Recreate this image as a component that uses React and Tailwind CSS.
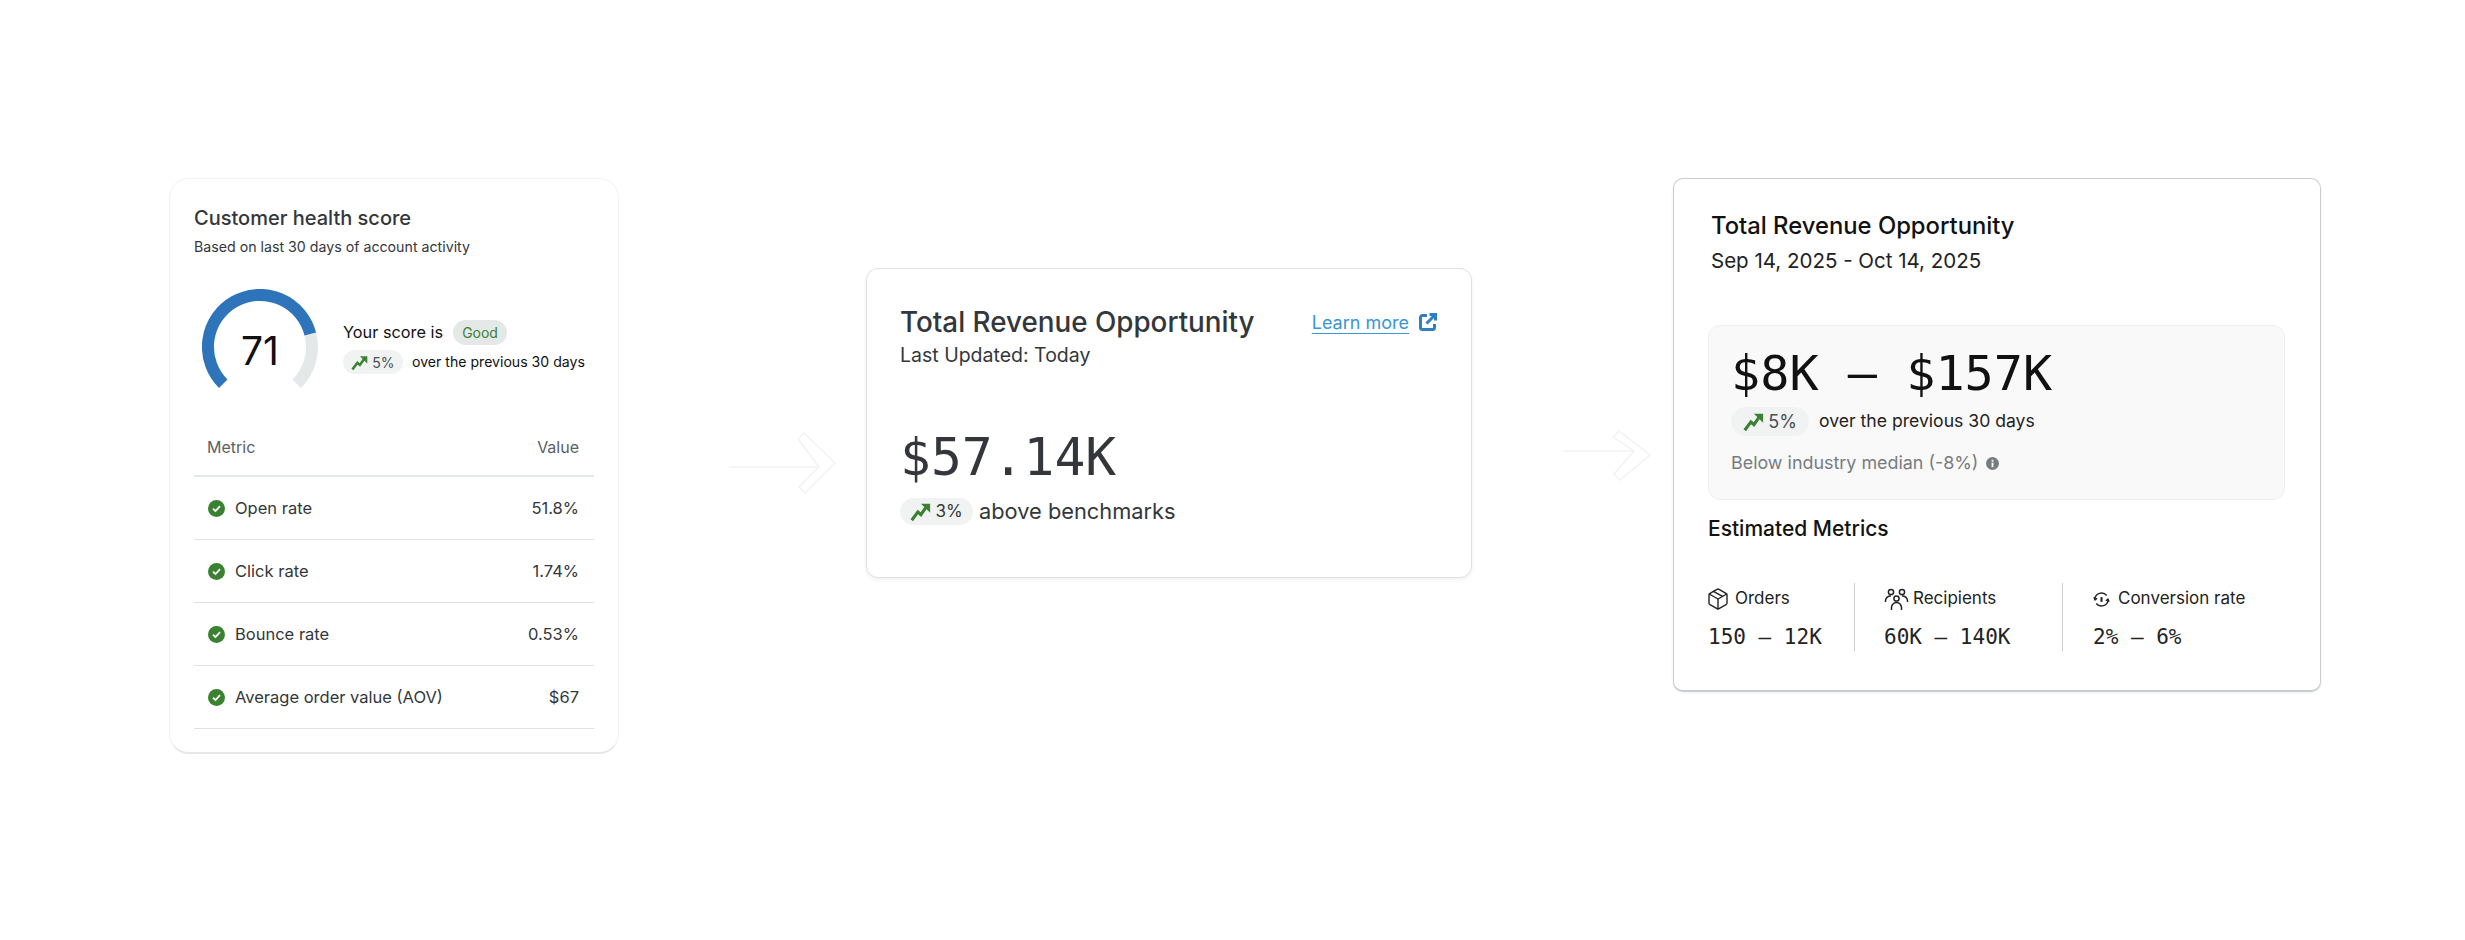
import { Package } from 'lucide-react'

const rows = [
  { label: 'Open rate', value: '51.8%' },
  { label: 'Click rate', value: '1.74%' },
  { label: 'Bounce rate', value: '0.53%' },
  { label: 'Average order value (AOV)', value: '$67' },
]

function Trend({ className }) {
  return (
    <svg viewBox="0 0 24 24" fill="none" className={className}>
      <path d="M2 22 L9 12.5 L12.5 15.5 L18.5 7" stroke="#3b8132" strokeWidth="3.6" />
      <path d="M12.5 3 H23 V13.5 Z" fill="#3b8132" />
    </svg>
  )
}

function Check() {
  return (
    <svg viewBox="0 0 17 17" className="w-[17px] h-[17px] shrink-0">
      <circle cx="8.5" cy="8.5" r="8.5" fill="#3b8132" />
      <path d="M5 8.8 L7.5 11 L12 6.2" fill="none" stroke="#fff" strokeWidth="1.8" />
    </svg>
  )
}

function Arrow({ className, w, h, line, tip }) {
  // outlined chevron with a tail, barely visible in the reference
  const top = h - 4
  return (
    <svg viewBox={`0 0 ${w} ${h}`} fill="none" stroke="#f1f2f2" strokeWidth="1.5" className={className}>
      <path d={`M0 ${line} H${w - 17}`} />
      <path d={`M${w - 38} 7 L${w - 32} 1 L${w - 1} ${tip} L${w - 31} ${top + 3} L${w - 37} ${top - 3} L${w - 17} ${line} Z`} />
    </svg>
  )
}

function HealthCard() {
  return (
    <div className="w-[450px] h-[576px] shrink-0 bg-white rounded-[20px] border border-[#f1f2f2] border-b-[#e6e8e8] border-b-2 px-[24px] pt-[26px]">
      <h2 className="text-[20px] leading-[26px] font-medium text-[#33373b]">Customer health score</h2>
      <p className="text-[14.2px] leading-[20px] mt-[6px] text-[#33373b]">Based on last 30 days of account activity</p>

      <div className="flex items-center mt-[32px]">
        <div className="relative w-[116px] h-[116px] ml-[8px] shrink-0">
          <svg viewBox="0 0 116 116" fill="none" strokeWidth="12" className="w-[116px] h-[116px]">
            <path d="M108.3 45 A52 52 0 0 1 94.77 94.77" stroke="#e4e8e8" />
            <path d="M21.23 94.77 A52 52 0 1 1 108.3 45" stroke="#2e74ba" />
          </svg>
          <span className="absolute inset-x-0 top-[40px] text-center text-[39px] leading-[44px] text-[#111]">71</span>
        </div>
        <div className="ml-[25px]">
          <div className="flex items-center">
            <span className="text-[16.3px] text-[#111]">Your score is</span>
            <span className="ml-[10px] w-[54px] h-[25px] rounded-full bg-[#e4e9e8] flex items-center justify-center text-[14px] text-[#3b8132]">Good</span>
          </div>
          <div className="flex items-center mt-[5px]">
            <span className="w-[60px] h-[24px] rounded-full bg-[#f1f3f3] flex items-center justify-center gap-[4px] text-[14px] text-[#4a4f53]">
              <Trend className="w-[17px] h-[17px]" />5%
            </span>
            <span className="ml-[9px] text-[14.1px] text-[#111]">over the previous 30 days</span>
          </div>
        </div>
      </div>

      <div className="mt-[11px]">
        <div className="flex justify-between items-center h-[61px] pt-[3px] pl-[13px] pr-[15px] border-b-2 border-[#e4e8e8] text-[16px] text-[#5b6166]">
          <span>Metric</span>
          <span>Value</span>
        </div>
        {rows.map((r) => (
          <div key={r.label} className="flex items-center h-[63px] pl-[14px] pr-[15px] border-b border-[#dfe2e2] text-[16.5px] text-[#33373b]">
            <Check />
            <span className="ml-[10px]">{r.label}</span>
            <span className="ml-auto">{r.value}</span>
          </div>
        ))}
      </div>
    </div>
  )
}

function OpportunityCard() {
  return (
    <div className="w-[606px] h-[310px] shrink-0 mt-[90px] ml-[30px] bg-white rounded-[12px] border border-[#dfe1e1] shadow-[0_2px_4px_rgba(0,0,0,0.06)] pl-[33px] pr-[34.5px] pt-[35px]">
      <div className="flex justify-between items-center">
        <h2 className="text-[27.8px] leading-[36px] font-medium text-[#33373b]">Total Revenue Opportunity</h2>
        <a className="flex items-center gap-[9.5px] text-[18px] text-[#3a96d6]">
          <span className="underline underline-offset-[4px]">Learn more</span>
          <svg viewBox="0 0 18 18" fill="none" stroke="#2f7fc4" strokeWidth="3" className="w-[18px] h-[18px]">
            <path d="M8 2.5H3.5a2 2 0 0 0-2 2v10a2 2 0 0 0 2 2h10a2 2 0 0 0 2-2V11" />
            <path d="M7.5 10.5 L16 2 M10.5 1.5 H16.5 V7.5" />
          </svg>
        </a>
      </div>
      <p className="text-[19.5px] leading-[24px] mt-[3px] text-[#33373b]">Last Updated: Today</p>
      <div className="font-[family-name:'DejaVu_Sans_Mono',monospace] text-[51.3px] leading-[60px] mt-[60px] text-[#33373b]">$57.14K</div>
      <div className="flex items-center mt-[8px]">
        <span className="w-[73px] h-[27px] rounded-full bg-[#f1f3f3] flex items-center justify-center gap-[4px] text-[17px] text-[#33373b]">
          <Trend className="w-[21px] h-[21px]" />3%
        </span>
        <span className="ml-[6px] text-[21.8px] text-[#33373b]">above benchmarks</span>
      </div>
    </div>
  )
}

function RangeCard() {
  return (
    <div className="w-[648px] h-[514px] shrink-0 ml-[22px] bg-white rounded-[10px] border border-[#c9cdcf] border-b-2 shadow-[0_1px_3px_rgba(0,0,0,0.06)] pl-[34px] pr-[35px] pt-[31px]">
      <h2 className="text-[23.8px] leading-[32px] font-medium text-[#111] ml-[3px]">Total Revenue Opportunity</h2>
      <p className="text-[20.5px] leading-[28px] mt-[5px] text-[#222] ml-[3px]">Sep 14, 2025 - Oct 14, 2025</p>

      <div className="h-[175px] mt-[50px] rounded-[12px] bg-[#f9f9f9] border border-[#eeefef] pl-[22px] pt-[19px]">
        <div className="font-[family-name:'DejaVu_Sans_Mono',monospace] text-[48.5px] leading-[56px] text-[#111]">$8K – $157K</div>
        <div className="flex items-center mt-[6px]">
          <span className="w-[78px] h-[29px] rounded-full bg-[#f1f3f3] flex items-center justify-center gap-[4px] text-[18px] text-[#4a4f53]">
            <Trend className="w-[21px] h-[21px]" />5%
          </span>
          <span className="ml-[10px] text-[17.6px] text-[#222]">over the previous 30 days</span>
        </div>
        <div className="flex items-center mt-[14px] text-[17.9px] text-[#777c80]">
          Below industry median (-8%)
          <svg viewBox="0 0 13 13" className="w-[13px] h-[13px] ml-[8px]">
            <circle cx="6.5" cy="6.5" r="6.5" fill="#777c80" />
            <rect x="5.6" y="5.6" width="1.8" height="4.6" fill="#fff" />
            <rect x="5.6" y="2.8" width="1.8" height="1.8" fill="#fff" />
          </svg>
        </div>
      </div>

      <h3 className="text-[21px] leading-[28px] font-medium text-[#111] mt-[15px]">Estimated Metrics</h3>

      <div className="flex mt-[40px] h-[68px] -ml-[2px]">
        <div className="w-[149px] border-r border-[#c9cdcf]">
          <div className="flex items-center gap-[5px] h-[26px] text-[17px] text-[#222] mt-[3px]">
            <Package className="w-[24px] h-[24px]" strokeWidth={1.4} />Orders
          </div>
          <div className="font-[family-name:'DejaVu_Sans_Mono',monospace] text-[21px] leading-[28px] mt-[11px] ml-[2px] text-[#222]">150 – 12K</div>
        </div>
        <div className="w-[208px] pl-[29px] border-r border-[#c9cdcf]">
          <div className="flex items-center gap-[4px] h-[26px] text-[17px] text-[#222] mt-[3px]">
            <svg viewBox="0 0 24 24" fill="none" stroke="#222" strokeWidth="1.5" className="w-[25px] h-[24px]">
              <circle cx="6.5" cy="5" r="2.6" />
              <circle cx="17.5" cy="5" r="2.6" />
              <circle cx="12" cy="11.5" r="2.6" />
              <path d="M7 23v-2.5a5 5 0 0 1 10 0V23" />
              <path d="M1 15v-1.5a5 5 0 0 1 5.5-4.5" />
              <path d="M23 15v-1.5a5 5 0 0 0-5.5-4.5" />
            </svg>
            Recipients
          </div>
          <div className="font-[family-name:'DejaVu_Sans_Mono',monospace] text-[21px] leading-[28px] mt-[11px] text-[#222]">60K – 140K</div>
        </div>
        <div className="pl-[30px]">
          <div className="flex items-center gap-[8px] h-[26px] text-[17px] text-[#222] mt-[3px]">
            <svg viewBox="0 0 18 18" fill="none" stroke="#222" strokeWidth="1.5" className="w-[17px] h-[17px]">
              <path d="M2 9a7 7 0 0 1 12.5-4.2M16 9a7 7 0 0 1-12.5 4.2" />
              <path d="M1 6.5 L2.2 9.4 L4.4 7.6 M17 11.5 L15.8 8.6 L13.6 10.4" />
              <path d="M9 6.5v5" strokeWidth="2.2" />
            </svg>
            Conversion rate
          </div>
          <div className="font-[family-name:'DejaVu_Sans_Mono',monospace] text-[21px] leading-[28px] mt-[11px] text-[#222]">2% – 6%</div>
        </div>
      </div>
    </div>
  )
}

export default function App() {
  return (
    <div className="min-h-[940px] bg-white font-[family-name:Inter,sans-serif] flex items-start pl-[169px] pt-[178px]">
      <HealthCard />
      <Arrow className="w-[107px] h-[62px] shrink-0 mt-[254px] ml-[110px]" w={107} h={62} line={35} tip={31} />
      <OpportunityCard />
      <Arrow className="w-[87px] h-[51px] shrink-0 mt-[252px] ml-[92px]" w={87} h={51} line={21} tip={25} />
      <RangeCard />
    </div>
  )
}
